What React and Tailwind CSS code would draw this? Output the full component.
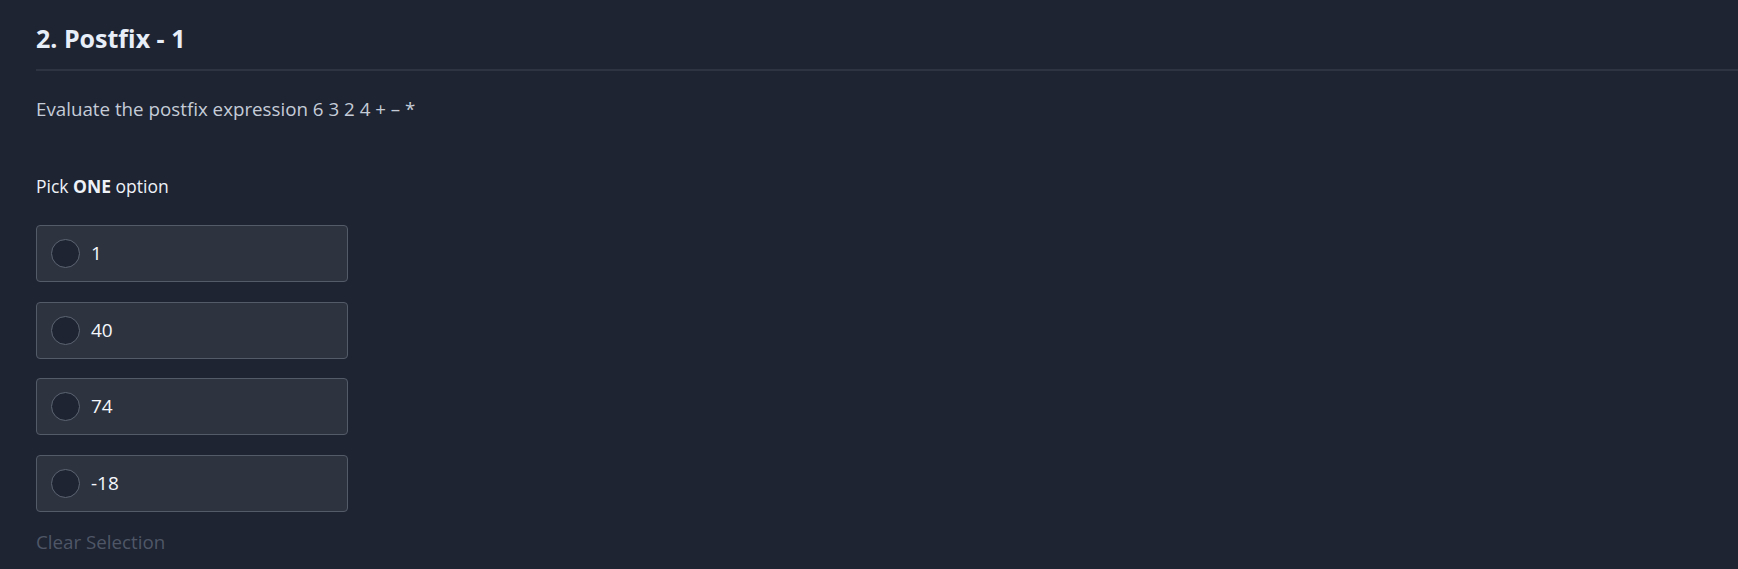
import React, { useState } from "react";

const options = ["1", "40", "74", "-18"];

export default function App() {
  const [picked, setPicked] = useState(null);

  return (
    <div className="w-full min-h-screen bg-[#1e2432] pl-9 pt-[22px] font-['Open_Sans',sans-serif]">
      <h1 className="text-[25px] font-bold leading-[32px] text-[#e8eef8] pb-[15px] border-b-2 border-[#2e3441]">
        2. Postfix - 1
      </h1>

      <p className="mt-[26px] text-[18.75px] leading-[24px] text-[#c5ccd8]">
        Evaluate the postfix expression 6 3 2 4 + – *
      </p>

      <div className="mt-[54px] text-[17.5px] leading-[22px] text-[#eef2f8]">
        Pick <span className="font-bold">ONE</span> option
      </div>

      <div className="mt-[28px] flex flex-col gap-[19.5px]">
        {options.map((o, i) => (
          <label
            key={o}
            onClick={() => setPicked(i)}
            className="w-[312px] h-[57px] flex items-center gap-[11px] pl-[14px] rounded-[4px] border border-[#535a68] bg-[#2e3340] cursor-pointer"
          >
            <span className="w-[29px] h-[29px] rounded-full border border-[#5d6472] bg-[#1e2432] flex items-center justify-center">
              {picked === i ? <span className="w-[13px] h-[13px] rounded-full bg-[#e8eef8]" /> : null}
            </span>
            <span className="text-[19px] text-[#f4f7fb]">{o}</span>
          </label>
        ))}
      </div>

      <button
        onClick={() => setPicked(null)}
        className="mt-[18px] text-[18.75px] leading-[24px] text-[#4f5767]"
      >
        Clear Selection
      </button>
    </div>
  );
}
